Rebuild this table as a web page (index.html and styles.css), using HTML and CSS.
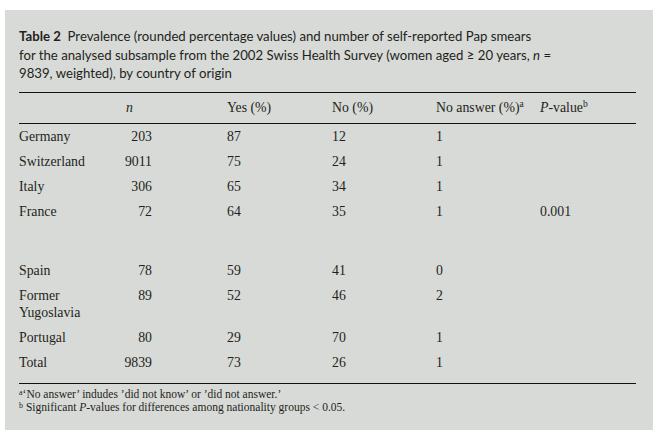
FILE: index.html
```html
<!DOCTYPE html>
<html>
<head>
<meta charset="utf-8">
<link rel="stylesheet" href="styles.css">
</head>
<body>
<div class="panel">
  <p class="caption"><b class="label">Table 2</b> &nbsp;Prevalence (rounded percentage values) and number of self-reported Pap smears<br>for the analysed subsample from the 2002 Swiss Health Survey (women aged &ge; 20 years, <i>n</i> =<br>9839, weighted), by country of origin</p>
  <table class="data">
    <colgroup>
      <col class="c-country"><col class="c-n"><col class="c-yes"><col class="c-no"><col class="c-na"><col class="c-p">
    </colgroup>
    <thead>
      <tr><th></th><th class="num-h"><i>n</i></th><th class="pad">Yes (%)</th><th>No (%)</th><th>No answer (%)<sup>a</sup></th><th><i>P</i>-value<sup>b</sup></th></tr>
    </thead>
    <tbody>
      <tr><td>Germany</td><td class="num">203</td><td class="pad">87</td><td>12</td><td>1</td><td></td></tr>
      <tr><td>Switzerland</td><td class="num">9011</td><td class="pad">75</td><td>24</td><td>1</td><td></td></tr>
      <tr><td>Italy</td><td class="num">306</td><td class="pad">65</td><td>34</td><td>1</td><td></td></tr>
      <tr><td>France</td><td class="num">72</td><td class="pad">64</td><td>35</td><td>1</td><td>0.001</td></tr>
      <tr class="spacer"><td colspan="6"></td></tr>
      <tr><td>Spain</td><td class="num">78</td><td class="pad">59</td><td>41</td><td>0</td><td></td></tr>
      <tr><td>Former Yugoslavia</td><td class="num">89</td><td class="pad">52</td><td>46</td><td>2</td><td></td></tr>
      <tr><td>Portugal</td><td class="num">80</td><td class="pad">29</td><td>70</td><td>1</td><td></td></tr>
      <tr><td>Total</td><td class="num">9839</td><td class="pad">73</td><td>26</td><td>1</td><td></td></tr>
    </tbody>
  </table>
  <div class="notes">
    <p><sup>a</sup>&lsquo;No answer&rsquo; indudes &rsquo;did not know&rsquo; or &rsquo;did not answer.&rsquo;</p>
    <p><sup>b</sup> Significant <i>P</i>-values for differences among nationality groups &lt; 0.05.</p>
  </div>
</div>
</body>
</html>
```

FILE: styles.css
```css
html, body {
  margin: 0;
  padding: 0;
  background: #ffffff;
}
body {
  padding: 10px 0 0 5px;
  overflow: hidden;
}
.panel {
  background: #d8dad7;
  width: 660px;
  height: 430px;
  padding: 17px 0 0 14px;
  box-sizing: border-box;
  color: #231f20;
}
.caption {
  margin: 0;
  width: 560px;
  font-family: Lato, "Open Sans", sans-serif;
  font-size: 13.2px;
  line-height: 18.5px;
  white-space: nowrap;
}
.caption .label {
  font-weight: bold;
}
.data {
  margin-top: 9px;
  border-collapse: collapse;
  table-layout: fixed;
  width: 617px;
  font-family: "Liberation Serif", "Times New Roman", serif;
  font-size: 13.8px;
  line-height: 17.5px;
}
.c-country { width: 88px; }
.c-n { width: 45px; }
.c-yes { width: 180px; }
.c-no { width: 104px; }
.c-na { width: 104px; }
.c-p { width: 96px; }
.data th {
  font-weight: normal;
  text-align: left;
  padding: 6.5px 0 6px 0;
  white-space: nowrap;
}
.data thead tr {
  border-top: 1.3px solid #111;
  border-bottom: 1.3px solid #111;
}
.data th.num-h {
  text-align: center;
}
.data td {
  padding: 4px 0 3.5px 0;
  vertical-align: top;
}
.data .num {
  text-align: right;
}
.data .pad {
  padding-left: 75px;
}
.data tr.spacer td {
  height: 34px;
  padding: 0;
}
.data sup {
  font-size: 9.5px;
  line-height: 0;
  vertical-align: 5px;
}
.notes {
  width: 617px;
  margin-top: 8px;
  border-top: 1.3px solid #111;
  padding-top: 4px;
  font-family: "Liberation Serif", "Times New Roman", serif;
  font-size: 11.5px;
  line-height: 13px;
}
.notes p {
  margin: 0;
}
.notes sup {
  font-size: 8px;
  line-height: 0;
  vertical-align: 3px;
}
```
